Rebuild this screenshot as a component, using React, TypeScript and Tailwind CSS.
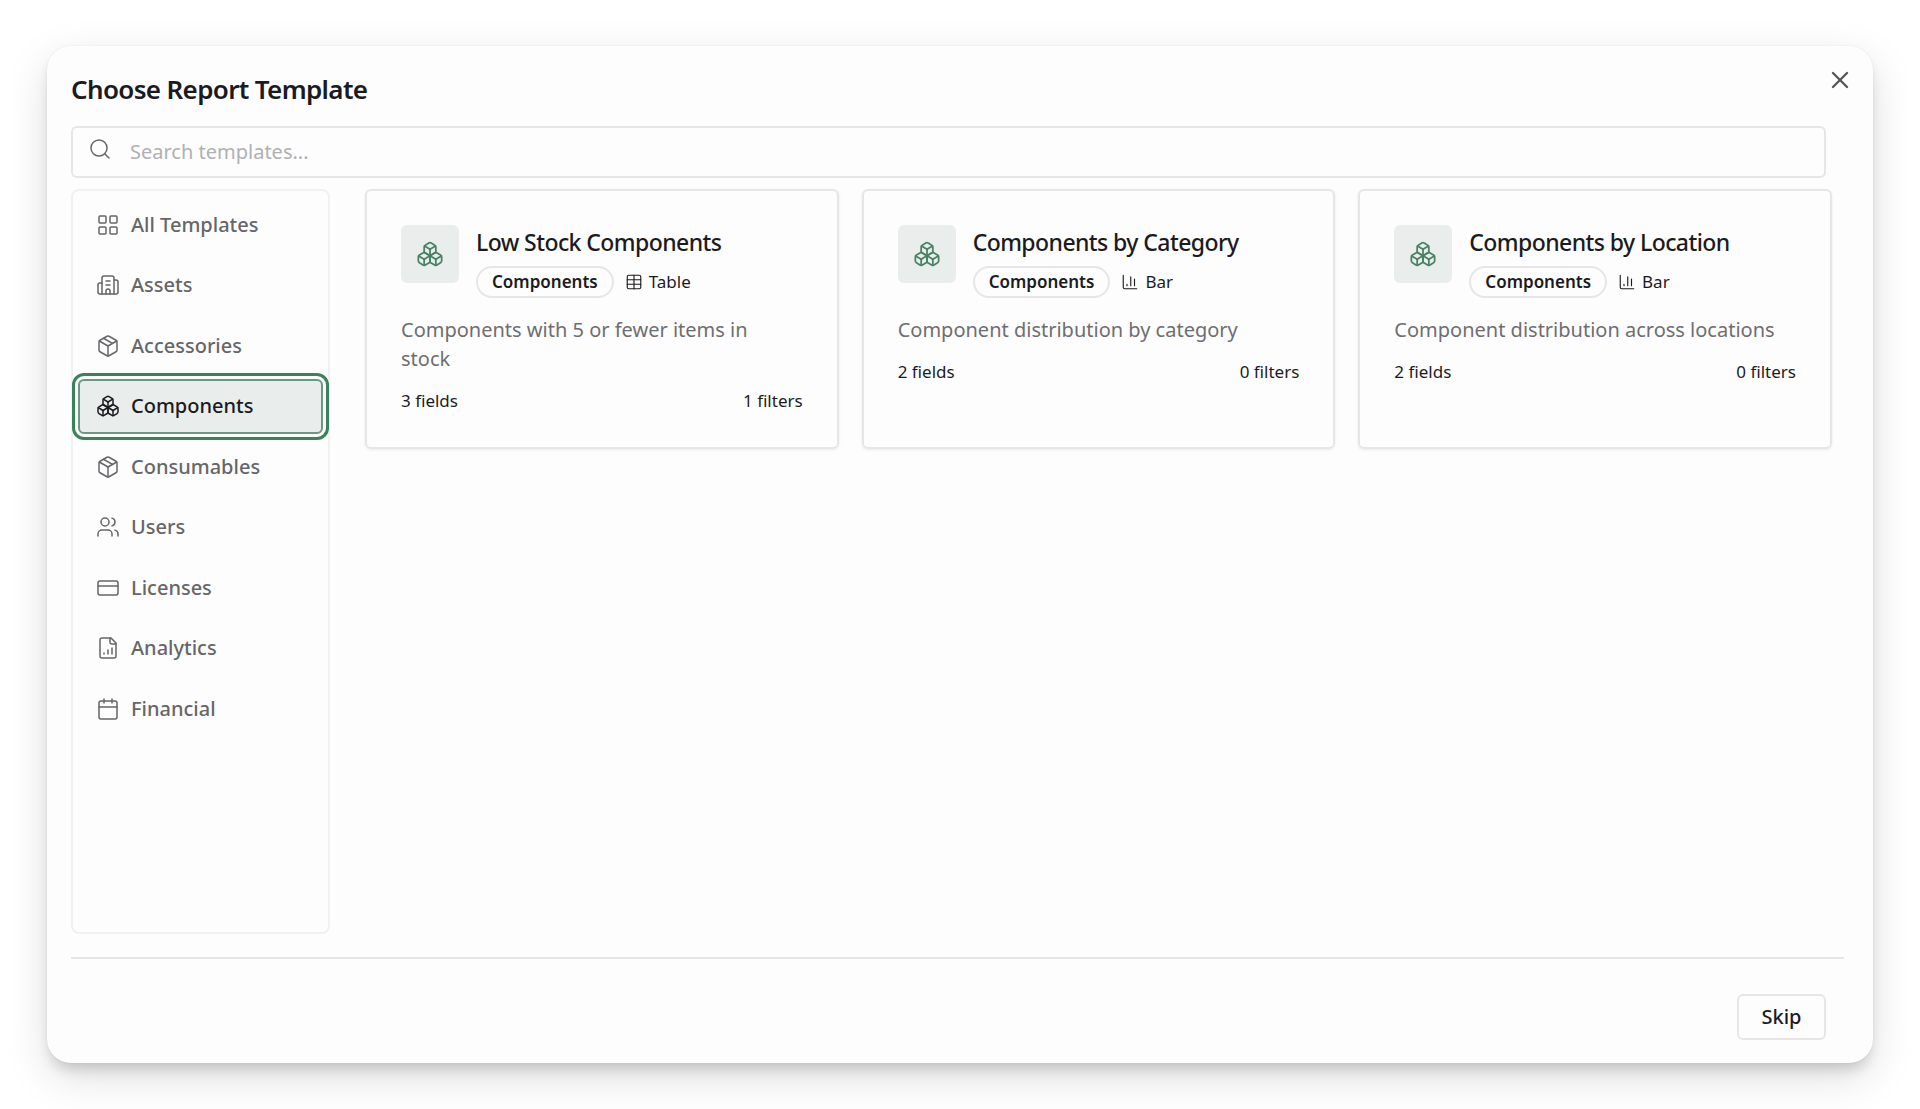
import {
  Boxes,
  Calendar,
  CreditCard,
  LayoutGrid,
  Package,
  Search,
  Users,
  X,
} from "lucide-react"
import type { ReactNode } from "react"

type IconProps = { className?: string; strokeWidth?: number }

function SvgIcon({ className, strokeWidth = 2, children }: IconProps & { children: ReactNode }) {
  return (
    <svg
      viewBox="0 0 24 24"
      fill="none"
      stroke="currentColor"
      strokeWidth={strokeWidth}
      strokeLinecap="round"
      strokeLinejoin="round"
      className={className}
      aria-hidden="true"
    >
      {children}
    </svg>
  )
}

function AssetsIcon(props: IconProps) {
  return (
    <SvgIcon {...props}>
      <path d="M6 21V5a2 2 0 0 1 2-2h8a2 2 0 0 1 2 2v16" />
      <path d="M6 10H4a2 2 0 0 0-2 2v7a2 2 0 0 0 2 2h16a2 2 0 0 0 2-2V9a2 2 0 0 0-2-2h-2" />
      <path d="M10 8h4M10 12h4" />
      <path d="M10 21v-3a2 2 0 0 1 4 0v3" />
    </SvgIcon>
  )
}

function AnalyticsIcon(props: IconProps) {
  return (
    <SvgIcon {...props}>
      <path d="M15 2H6a2 2 0 0 0-2 2v16a2 2 0 0 0 2 2h12a2 2 0 0 0 2-2V7Z" />
      <path d="M14 2v4a2 2 0 0 0 2 2h4" />
      <path d="M8 18v-1M12 18v-4M16 18v-6" />
    </SvgIcon>
  )
}

function TableIcon(props: IconProps) {
  return (
    <SvgIcon {...props}>
      <rect x="3" y="3" width="18" height="18" rx="2" />
      <path d="M12 3v18M3 9h18M3 15h18" />
    </SvgIcon>
  )
}

function BarIcon(props: IconProps) {
  return (
    <SvgIcon {...props}>
      <path d="M3 3v16a2 2 0 0 0 2 2h16" />
      <path d="M8 17v-2M13 17V5M18 17V8" />
    </SvgIcon>
  )
}

const categories = [
  { name: "All Templates", icon: LayoutGrid },
  { name: "Assets", icon: AssetsIcon },
  { name: "Accessories", icon: Package },
  { name: "Components", icon: Boxes },
  { name: "Consumables", icon: Package },
  { name: "Users", icon: Users },
  { name: "Licenses", icon: CreditCard },
  { name: "Analytics", icon: AnalyticsIcon },
  { name: "Financial", icon: Calendar },
]

const templates = [
  {
    title: "Low Stock Components",
    description: "Components with 5 or fewer items in stock",
    view: "Table",
    viewIcon: TableIcon,
    fields: 3,
    filters: 1,
  },
  {
    title: "Components by Category",
    description: "Component distribution by category",
    view: "Bar",
    viewIcon: BarIcon,
    fields: 2,
    filters: 0,
  },
  {
    title: "Components by Location",
    description: "Component distribution across locations",
    view: "Bar",
    viewIcon: BarIcon,
    fields: 2,
    filters: 0,
  },
]

export default function App() {
  const active = "Components"

  return (
    <main className="min-h-screen bg-white px-[47px] py-[46px] font-['Noto_Sans',sans-serif] text-[#1b1b1f]">
      <div
        role="dialog"
        aria-labelledby="dialog-title"
        className="relative rounded-3xl bg-[#fdfdfd] pt-[23px] pr-[29px] pb-[23px] pl-6 shadow-[0_0_2px_rgba(0,0,0,0.08),0_10px_14px_-4px_rgba(0,0,0,0.16),0_14px_44px_rgba(0,0,0,0.13)]"
      >
        <button type="button" aria-label="Close" className="absolute top-5 right-[19px] text-[#55555a]">
          <X className="size-7" strokeWidth={2} />
        </button>

        <h1 id="dialog-title" className="text-[26px] leading-10 font-semibold tracking-tight">
          Choose Report Template
        </h1>

        {/* Search */}
        <label className="mt-[17px] mr-[18px] flex h-13 items-center rounded-md border-2 border-[#e6e6e8] px-[15px]">
          <Search className="mb-1.5 size-6 shrink-0 text-[#66666b]" strokeWidth={1.5} />
          <input
            type="text"
            aria-label="Search templates"
            placeholder="Search templates..."
            className="ml-[18px] w-full bg-transparent text-xl outline-none placeholder:text-[#b0b0b3]"
          />
        </label>

        <div className="mt-[11px] flex gap-[35px] pr-3">
          {/* Categories */}
          <nav className="h-[745px] w-[259px] shrink-0 rounded-lg border-2 border-[#f1f1f2] px-[5px] py-1.5">
            <ul className="flex h-[539px] flex-col justify-between">
              {categories.map(({ name, icon: Icon }) => (
                <li key={name}>
                  <button
                    type="button"
                    className={
                      name === active
                        ? "flex h-[55px] w-full items-center gap-[11px] rounded-md border-2 border-[#6a9880] bg-[#e9eeec] px-4 text-xl font-medium text-[#1b1b1f] outline-3 outline-offset-3 outline-[#3a8259]"
                        : "flex h-[55px] w-full items-center gap-[11px] rounded-md border-2 border-transparent px-4 text-xl font-medium text-[#66666a]"
                    }
                  >
                    <Icon className="size-6 shrink-0" strokeWidth={1.5} />
                    {name}
                  </button>
                </li>
              ))}
            </ul>
          </nav>

          {/* Templates */}
          <section className="grid flex-1 grid-cols-3 items-start gap-[23px]">
            {templates.map(({ title, description, view, viewIcon: ViewIcon, fields, filters }) => (
              <article
                key={title}
                className="h-[260px] rounded-md border-2 border-[#e6e6e8] p-[34px] shadow-[0_1px_3px_rgba(0,0,0,0.08)]"
              >
                <div className="flex gap-[17px]">
                  <div className="flex size-[58px] shrink-0 items-center justify-center rounded-md bg-[#e9eeec] text-[#4a8064]">
                    <Boxes className="size-7" strokeWidth={1.5} />
                  </div>
                  <div>
                    <h2 className="text-[23px] leading-[34px] font-medium tracking-tight">{title}</h2>
                    <div className="mt-[7px] flex items-center gap-[11px]">
                      <span className="rounded-full border-2 border-[#e6e6e8] px-3.5 text-[17px] leading-7 font-semibold">
                        Components
                      </span>
                      <span className="flex items-center gap-1.5 text-[17px]">
                        <ViewIcon className="size-[18px]" strokeWidth={1.5} />
                        {view}
                      </span>
                    </div>
                  </div>
                </div>
                <p className="mt-[17px] pr-4 text-xl leading-[29px] text-[#6e6e72]">{description}</p>
                <div className="mt-4 flex justify-between text-[17px] leading-6">
                  <span>{fields} fields</span>
                  <span>{filters} filters</span>
                </div>
              </article>
            ))}
          </section>
        </div>

        <div className="mt-[23px] flex justify-end border-t-2 border-[#e6e6e8] pt-[35px] pr-[18px]">
          <button
            type="button"
            className="h-[46px] w-[89px] rounded-md border-2 border-[#e6e6e8] text-xl font-medium"
          >
            Skip
          </button>
        </div>
      </div>
    </main>
  )
}
